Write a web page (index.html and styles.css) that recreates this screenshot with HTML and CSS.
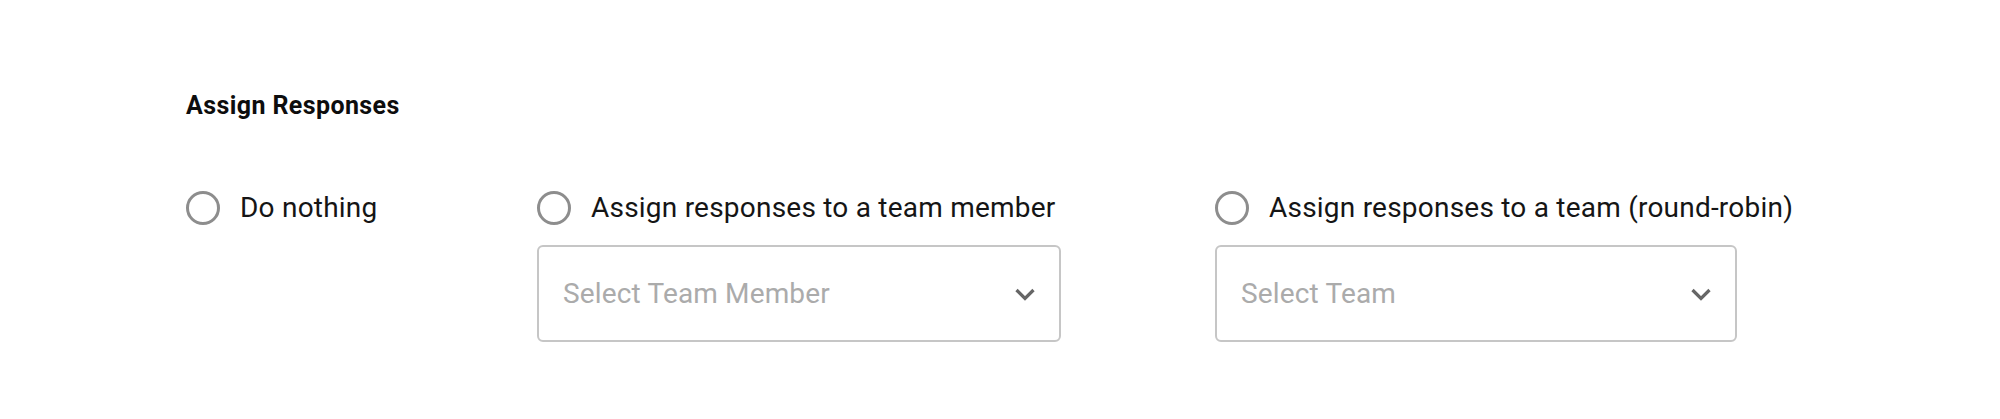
FILE: index.html
```html
<!DOCTYPE html>
<html>
<head>
<meta charset="utf-8">
<link rel="stylesheet" href="styles.css">
</head>
<body>
<div class="page">
  <h2 class="title">Assign Responses</h2>
  <div class="options">
    <div class="col col-1">
      <label class="radio"><span class="circle"></span><span class="text">Do nothing</span></label>
    </div>
    <div class="col col-2">
      <label class="radio"><span class="circle"></span><span class="text">Assign responses to a team member</span></label>
      <div class="select select-member">
        <span class="placeholder">Select Team Member</span>
        <svg class="chev" width="20" height="14" viewBox="0 0 20 14"><path d="M1.5 3 L10 11.5 L18.5 3" fill="none" stroke="#666" stroke-width="3.2"/></svg>
      </div>
    </div>
    <div class="col col-3">
      <label class="radio"><span class="circle"></span><span class="text">Assign responses to a team (round-robin)</span></label>
      <div class="select select-team">
        <span class="placeholder">Select Team</span>
        <svg class="chev" width="20" height="14" viewBox="0 0 20 14"><path d="M1.5 3 L10 11.5 L18.5 3" fill="none" stroke="#666" stroke-width="3.2"/></svg>
      </div>
    </div>
  </div>
</div>
</body>
</html>
```
FILE: styles.css
```css
html, body {
  margin: 0;
  padding: 0;
  background: #fff;
}
.page {
  padding: 92px 0 0 186px;
  font-family: Roboto, "Liberation Sans", sans-serif;
  color: #151515;
}
.title {
  margin: 0;
  font-size: 25px;
  line-height: 28px;
  font-weight: 700;
  letter-spacing: 0.4px;
  color: #0d0d0d;
}
.options {
  display: grid;
  grid-template-columns: 351px 678px auto;
  margin-top: 71px;
}
.col {
  display: flex;
  flex-direction: column;
  gap: 20px;
}
.radio {
  display: flex;
  align-items: center;
  gap: 20px;
  height: 34px;
}
.circle {
  box-sizing: border-box;
  width: 34px;
  height: 34px;
  border: 3px solid #8d8d8d;
  border-radius: 50%;
  flex: none;
}
.text {
  font-size: 28px;
  line-height: 34px;
  letter-spacing: 0.22px;
  white-space: nowrap;
}
.select {
  box-sizing: border-box;
  height: 97px;
  border: 2px solid #c6c6c6;
  border-radius: 6px;
  display: flex;
  align-items: center;
  justify-content: space-between;
  padding: 0 24px 0 24px;
}
.select-member { width: 524px; }
.select-team { width: 522px; }
.placeholder {
  font-size: 28px;
  line-height: 34px;
  letter-spacing: 0.15px;
  color: #ababab;
}
.chev { display: block; }
```
